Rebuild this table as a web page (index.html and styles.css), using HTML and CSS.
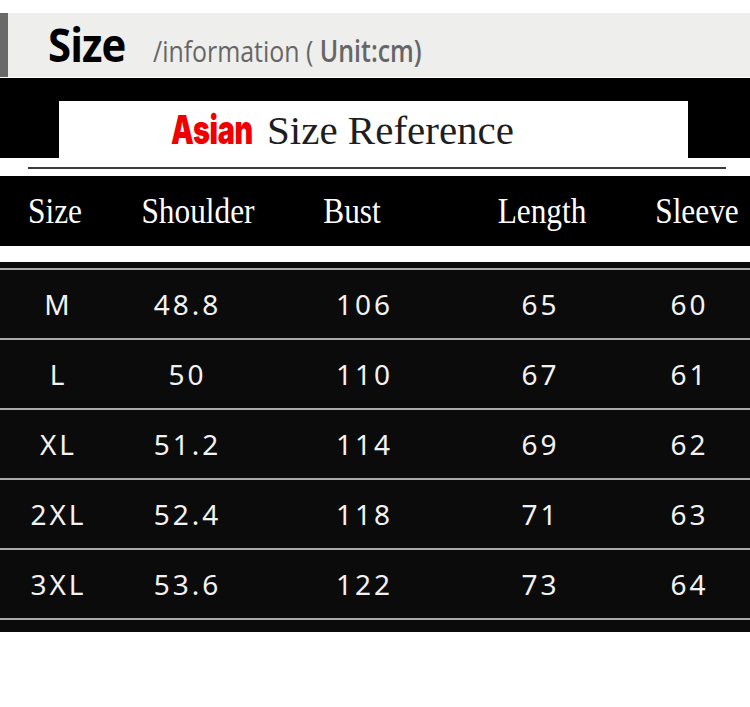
FILE: index.html
```html
<!DOCTYPE html>
<html lang="en">
<head>
<meta charset="utf-8">
<title>Size information</title>
<link rel="stylesheet" href="styles.css">
</head>
<body>
<div class="page">
  <div class="title-bar">
    <span class="title-main">Size</span>
    <span class="title-sub"><span class="sub-light">/information (&nbsp;</span><span class="sub-bold">Unit:cm)</span></span>
  </div>
  <div class="banner">
    <div class="banner-box">
      <span class="asian">Asian</span>
      <span class="banner-text">Size Reference</span>
    </div>
  </div>
  <div class="divider"><div class="divider-line"></div></div>
  <div class="thead">
    <div class="hcell"><span>Size</span></div>
    <div class="hcell"><span>Shoulder</span></div>
    <div class="hcell"><span>Bust</span></div>
    <div class="hcell"><span>Length</span></div>
    <div class="hcell"><span>Sleeve</span></div>
  </div>
  <div class="tbody">
    <div class="row"><div>M</div><div>48.8</div><div>106</div><div>65</div><div>60</div></div>
    <div class="row"><div>L</div><div>50</div><div>110</div><div>67</div><div>61</div></div>
    <div class="row"><div>XL</div><div>51.2</div><div>114</div><div>69</div><div>62</div></div>
    <div class="row"><div>2XL</div><div>52.4</div><div>118</div><div>71</div><div>63</div></div>
    <div class="row row-last"><div>3XL</div><div>53.6</div><div>122</div><div>73</div><div>64</div></div>
    <div class="end-line"></div>
  </div>
</div>
</body>
</html>
```
FILE: styles.css
```css
* { box-sizing: border-box; }
html, body { margin: 0; padding: 0; background: #ffffff; }
body { width: 750px; height: 707px; overflow: hidden; }
.page { padding-top: 13px; }

.title-bar {
  height: 64px;
  margin-bottom: 1px;
  background: #eeeeec;
  border-left: 8px solid #696969;
  display: flex;
  align-items: baseline;
  padding-left: 40px;
}
.title-main {
  font-family: "Open Sans", sans-serif;
  font-weight: 700;
  font-size: 46px;
  line-height: 62px;
  color: #000;
  display: inline-block;
  transform: scaleX(0.91);
  transform-origin: left center;
  letter-spacing: -1px;
}
.title-sub {
  font-family: "Open Sans", sans-serif;
  font-size: 30px;
  color: #666;
  display: inline-block;
  margin-left: 20px;
  transform: scaleX(0.83);
  transform-origin: left center;
  white-space: nowrap;
}
.sub-bold { font-weight: 600; }

.banner {
  background: #000;
  height: 80px;
  padding: 23px 62px 0 59px;
}
.banner-box {
  background: #fff;
  height: 57px;
  display: flex;
  align-items: center;
  padding-left: 112px;
}
.asian {
  font-family: Inter, sans-serif;
  font-weight: 900;
  font-size: 40px;
  color: #f00000;
  display: inline-block;
  width: 78px;
  transform: scaleX(0.72);
  transform-origin: left center;
  white-space: nowrap;
  margin-right: 18px;
  letter-spacing: -0.5px;
}
.banner-text {
  font-family: "Liberation Serif", serif;
  font-size: 41px;
  color: #1e1e1e;
}

.divider {
  height: 18px;
  padding: 9px 24px 0 28px;
}
.divider-line {
  height: 2px;
  background: #3a3a3a;
}

.thead {
  background: #000;
  height: 70px;
  display: grid;
  grid-template-columns: 110px 176px 132px 248px 62px;
  align-items: center;
  margin-bottom: 16px;
}
.hcell {
  display: flex;
  justify-content: center;
  font-family: "Liberation Serif", serif;
  font-size: 36px;
  color: #fff;
  white-space: nowrap;
}
.hcell span {
  display: inline-block;
  transform: scaleX(0.87);
}

.tbody {
  background: #0b0b0b;
  padding-top: 6px;
  height: 370px;
}
.row {
  height: 70px;
  border-top: 2px solid #ababab;
  display: grid;
  grid-template-columns: 114px 144px 210px 142px 156px;
  align-items: center;
  font-family: "Noto Sans", sans-serif;
  font-size: 28px;
  letter-spacing: 3px;
  color: #f2f2f2;
}
.row div { text-align: center; padding-left: 3px; }
.end-line {
  height: 2px;
  background: #ababab;
}
```
